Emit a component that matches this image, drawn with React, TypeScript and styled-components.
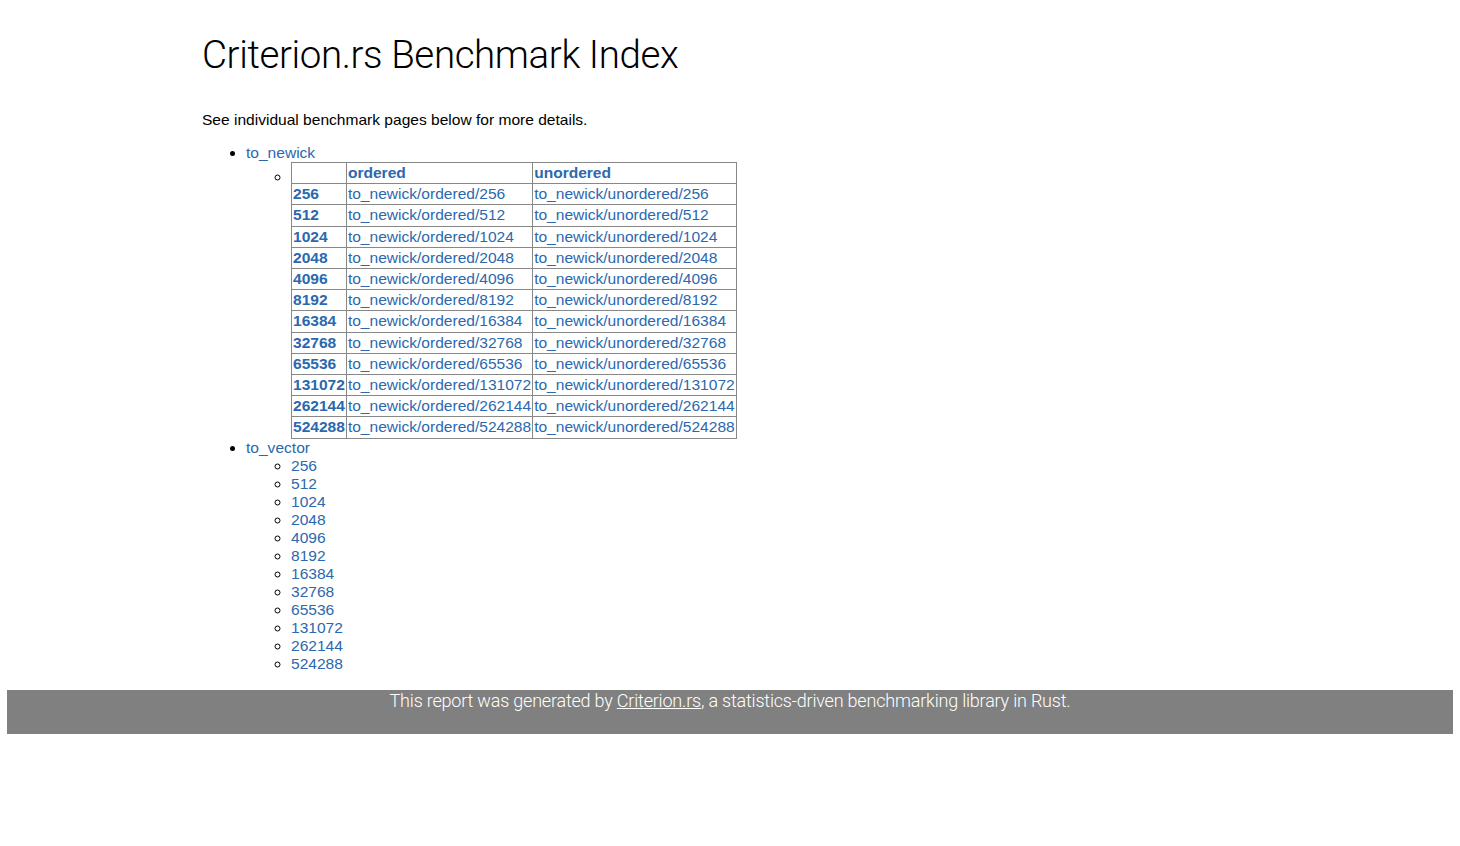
import React from "react";
import styled, { createGlobalStyle } from "styled-components";

const GlobalStyle = createGlobalStyle`
  body {
    margin: 7px;
    font: 15.55px "Liberation Sans", Arial, sans-serif;
    line-height: 18px;
    color: #000;
    background: #fff;
  }
`;

const Page = styled("div")`
  width: 1056px;
  margin: 0 auto;
`;

const Title = styled("h2")`
  font-family: Roboto, "Liberation Sans", sans-serif;
  font-size: 38.5px;
  font-weight: 300;
  letter-spacing: -0.4px;
  line-height: 46px;
  margin: 25px 0 33px;
`;

const Link = styled("a")`
  color: #2b68ae;
  text-decoration: none;
`;

const GroupList = styled("ul")`
  margin: 15px 0;
  padding-left: 44px;
  list-style: disc;
`;

const SubList = styled("ul")`
  margin: 0;
  padding-left: 45px;
  list-style: circle;
`;

const Table = styled("table")`
  border-collapse: collapse;
  border: 1px solid #888;
  font-size: 15.55px;
  line-height: 18.2px;
`;

const Cell = styled("td")`
  border: 1px solid #888;
  padding: 1px;
  white-space: nowrap;
`;

const HeadCell = styled("th")`
  border: 1px solid #888;
  padding: 1px;
  text-align: left;
  font-weight: bold;
  white-space: nowrap;
`;

const Footer = styled("div")`
  height: 44px;
  background: #808080;
  color: #fff;
  font-family: Roboto, "Liberation Sans", sans-serif;
  font-size: 18px;
  font-weight: 300;
  letter-spacing: -0.2px;
  line-height: 22px;
`;

const FooterText = styled("p")`
  margin: 17px 0 0;
  text-align: center;
`;

const FooterLink = styled("a")`
  color: #fff;
  text-decoration: underline;
`;

const sizes = [
  "256",
  "512",
  "1024",
  "2048",
  "4096",
  "8192",
  "16384",
  "32768",
  "65536",
  "131072",
  "262144",
  "524288",
];

const funcs = ["ordered", "unordered"];

const App = () => (
  <>
    <GlobalStyle />
    <Page>
      <Title>Criterion.rs Benchmark Index</Title>
      See individual benchmark pages below for more details.
      <GroupList>
        <li>
          <Link href="#">to_newick</Link>
        </li>
        <SubList>
          <li>
            <Table>
              <tbody>
                <tr>
                  <HeadCell />
                  {funcs.map((f) => (
                    <HeadCell key={f}>
                      <Link href="#">{f}</Link>
                    </HeadCell>
                  ))}
                </tr>
                {sizes.map((s) => (
                  <tr key={s}>
                    <HeadCell>
                      <Link href="#">{s}</Link>
                    </HeadCell>
                    {funcs.map((f) => (
                      <Cell key={f}>
                        <Link href="#">{`to_newick/${f}/${s}`}</Link>
                      </Cell>
                    ))}
                  </tr>
                ))}
              </tbody>
            </Table>
          </li>
        </SubList>
        <li>
          <Link href="#">to_vector</Link>
        </li>
        <SubList>
          {sizes.map((s) => (
            <li key={s}>
              <Link href="#">{s}</Link>
            </li>
          ))}
        </SubList>
      </GroupList>
    </Page>
    <Footer>
      <FooterText>
        This report was generated by{" "}
        <FooterLink href="#">Criterion.rs</FooterLink>, a statistics-driven
        benchmarking library in Rust.
      </FooterText>
    </Footer>
  </>
);

export default App;
